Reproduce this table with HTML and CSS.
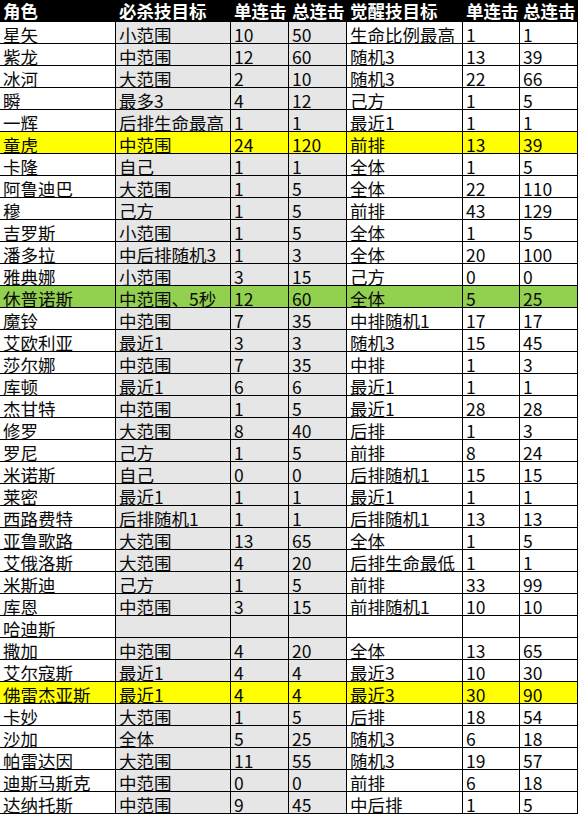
FILE: index.html
```html
<!DOCTYPE html>
<html lang="zh">
<head>
<meta charset="utf-8">
<title>角色技能目标</title>
<link rel="stylesheet" href="styles.css">
</head>
<body>
<div class="sheet">
  <div class="row head"><div class="c">角色</div><div class="c">必杀技目标</div><div class="c">单连击</div><div class="c">总连击</div><div class="c">觉醒技目标</div><div class="c">单连击</div><div class="c">总连击</div></div>
  <div class="row"><div class="c">星矢</div><div class="c g">小范围</div><div class="c g">10</div><div class="c g">50</div><div class="c">生命比例最高</div><div class="c">1</div><div class="c">1</div></div>
  <div class="row"><div class="c">紫龙</div><div class="c g">中范围</div><div class="c g">12</div><div class="c g">60</div><div class="c">随机3</div><div class="c">13</div><div class="c">39</div></div>
  <div class="row"><div class="c">冰河</div><div class="c g">大范围</div><div class="c g">2</div><div class="c g">10</div><div class="c">随机3</div><div class="c">22</div><div class="c">66</div></div>
  <div class="row"><div class="c">瞬</div><div class="c g">最多3</div><div class="c g">4</div><div class="c g">12</div><div class="c">己方</div><div class="c">1</div><div class="c">5</div></div>
  <div class="row"><div class="c">一辉</div><div class="c g">后排生命最高</div><div class="c g">1</div><div class="c g">1</div><div class="c">最近1</div><div class="c">1</div><div class="c">1</div></div>
  <div class="row yellow"><div class="c">童虎</div><div class="c g">中范围</div><div class="c g">24</div><div class="c g">120</div><div class="c">前排</div><div class="c">13</div><div class="c">39</div></div>
  <div class="row"><div class="c">卡隆</div><div class="c g">自己</div><div class="c g">1</div><div class="c g">1</div><div class="c">全体</div><div class="c">1</div><div class="c">5</div></div>
  <div class="row"><div class="c">阿鲁迪巴</div><div class="c g">大范围</div><div class="c g">1</div><div class="c g">5</div><div class="c">全体</div><div class="c">22</div><div class="c">110</div></div>
  <div class="row"><div class="c">穆</div><div class="c g">己方</div><div class="c g">1</div><div class="c g">5</div><div class="c">前排</div><div class="c">43</div><div class="c">129</div></div>
  <div class="row"><div class="c">吉罗斯</div><div class="c g">小范围</div><div class="c g">1</div><div class="c g">5</div><div class="c">全体</div><div class="c">1</div><div class="c">5</div></div>
  <div class="row"><div class="c">潘多拉</div><div class="c g">中后排随机3</div><div class="c g">1</div><div class="c g">3</div><div class="c">全体</div><div class="c">20</div><div class="c">100</div></div>
  <div class="row"><div class="c">雅典娜</div><div class="c g">小范围</div><div class="c g">3</div><div class="c g">15</div><div class="c">己方</div><div class="c">0</div><div class="c">0</div></div>
  <div class="row green"><div class="c">休普诺斯</div><div class="c g">中范围、5秒</div><div class="c g">12</div><div class="c g">60</div><div class="c">全体</div><div class="c">5</div><div class="c">25</div></div>
  <div class="row"><div class="c">魔铃</div><div class="c g">中范围</div><div class="c g">7</div><div class="c g">35</div><div class="c">中排随机1</div><div class="c">17</div><div class="c">17</div></div>
  <div class="row"><div class="c">艾欧利亚</div><div class="c g">最近1</div><div class="c g">3</div><div class="c g">3</div><div class="c">随机3</div><div class="c">15</div><div class="c">45</div></div>
  <div class="row"><div class="c">莎尔娜</div><div class="c g">中范围</div><div class="c g">7</div><div class="c g">35</div><div class="c">中排</div><div class="c">1</div><div class="c">3</div></div>
  <div class="row"><div class="c">库顿</div><div class="c g">最近1</div><div class="c g">6</div><div class="c g">6</div><div class="c">最近1</div><div class="c">1</div><div class="c">1</div></div>
  <div class="row"><div class="c">杰甘特</div><div class="c g">中范围</div><div class="c g">1</div><div class="c g">5</div><div class="c">最近1</div><div class="c">28</div><div class="c">28</div></div>
  <div class="row"><div class="c">修罗</div><div class="c g">大范围</div><div class="c g">8</div><div class="c g">40</div><div class="c">后排</div><div class="c">1</div><div class="c">3</div></div>
  <div class="row"><div class="c">罗尼</div><div class="c g">己方</div><div class="c g">1</div><div class="c g">5</div><div class="c">前排</div><div class="c">8</div><div class="c">24</div></div>
  <div class="row"><div class="c">米诺斯</div><div class="c g">自己</div><div class="c g">0</div><div class="c g">0</div><div class="c">后排随机1</div><div class="c">15</div><div class="c">15</div></div>
  <div class="row"><div class="c">莱密</div><div class="c g">最近1</div><div class="c g">1</div><div class="c g">1</div><div class="c">最近1</div><div class="c">1</div><div class="c">1</div></div>
  <div class="row"><div class="c">西路费特</div><div class="c g">后排随机1</div><div class="c g">1</div><div class="c g">1</div><div class="c">后排随机1</div><div class="c">13</div><div class="c">13</div></div>
  <div class="row"><div class="c">亚鲁歌路</div><div class="c g">大范围</div><div class="c g">13</div><div class="c g">65</div><div class="c">全体</div><div class="c">1</div><div class="c">5</div></div>
  <div class="row"><div class="c">艾俄洛斯</div><div class="c g">大范围</div><div class="c g">4</div><div class="c g">20</div><div class="c">后排生命最低</div><div class="c">1</div><div class="c">1</div></div>
  <div class="row"><div class="c">米斯迪</div><div class="c g">己方</div><div class="c g">1</div><div class="c g">5</div><div class="c">前排</div><div class="c">33</div><div class="c">99</div></div>
  <div class="row"><div class="c">库恩</div><div class="c g">中范围</div><div class="c g">3</div><div class="c g">15</div><div class="c">前排随机1</div><div class="c">10</div><div class="c">10</div></div>
  <div class="row"><div class="c">哈迪斯</div><div class="c g"></div><div class="c g"></div><div class="c g"></div><div class="c"></div><div class="c"></div><div class="c"></div></div>
  <div class="row"><div class="c">撒加</div><div class="c g">中范围</div><div class="c g">4</div><div class="c g">20</div><div class="c">全体</div><div class="c">13</div><div class="c">65</div></div>
  <div class="row"><div class="c">艾尔寇斯</div><div class="c g">最近1</div><div class="c g">4</div><div class="c g">4</div><div class="c">最近3</div><div class="c">10</div><div class="c">30</div></div>
  <div class="row yellow"><div class="c">佛雷杰亚斯</div><div class="c g">最近1</div><div class="c g">4</div><div class="c g">4</div><div class="c">最近3</div><div class="c">30</div><div class="c">90</div></div>
  <div class="row"><div class="c">卡妙</div><div class="c g">大范围</div><div class="c g">1</div><div class="c g">5</div><div class="c">后排</div><div class="c">18</div><div class="c">54</div></div>
  <div class="row"><div class="c">沙加</div><div class="c g">全体</div><div class="c g">5</div><div class="c g">25</div><div class="c">随机3</div><div class="c">6</div><div class="c">18</div></div>
  <div class="row"><div class="c">帕雷达因</div><div class="c g">大范围</div><div class="c g">11</div><div class="c g">55</div><div class="c">随机3</div><div class="c">19</div><div class="c">57</div></div>
  <div class="row"><div class="c">迪斯马斯克</div><div class="c g">中范围</div><div class="c g">0</div><div class="c g">0</div><div class="c">前排</div><div class="c">6</div><div class="c">18</div></div>
  <div class="row"><div class="c">达纳托斯</div><div class="c g">中范围</div><div class="c g">9</div><div class="c g">45</div><div class="c">中后排</div><div class="c">1</div><div class="c">5</div></div>
</div>
</body>
</html>
```
FILE: styles.css
```css
html, body {
  margin: 0;
  padding: 0;
  background: #ffffff;
}

body {
  font-family: "Noto Sans CJK SC", "Noto Sans", sans-serif;
  font-size: 17.5px;
  color: #0a0a0a;
}

.sheet {
  width: 578px;
}

.row {
  display: grid;
  grid-template-columns: 116px 115px 58px 58px 116px 57px 58px;
  height: 22px;
}

.c {
  box-sizing: border-box;
  height: 22px;
  border-right: 1px solid #000000;
  border-bottom: 1px solid #000000;
  padding: 3px 0 0 3px;
  line-height: 19px;
  white-space: nowrap;
  background: #ffffff;
}

.c.g {
  background: #e6e6e6;
}

.head .c {
  padding-top: 1px;
  background: #000000;
  color: #ffffff;
  font-weight: bold;
}

.yellow .c,
.yellow .c.g {
  background: #ffff00;
}

.green .c,
.green .c.g {
  background: #92d050;
}
```
